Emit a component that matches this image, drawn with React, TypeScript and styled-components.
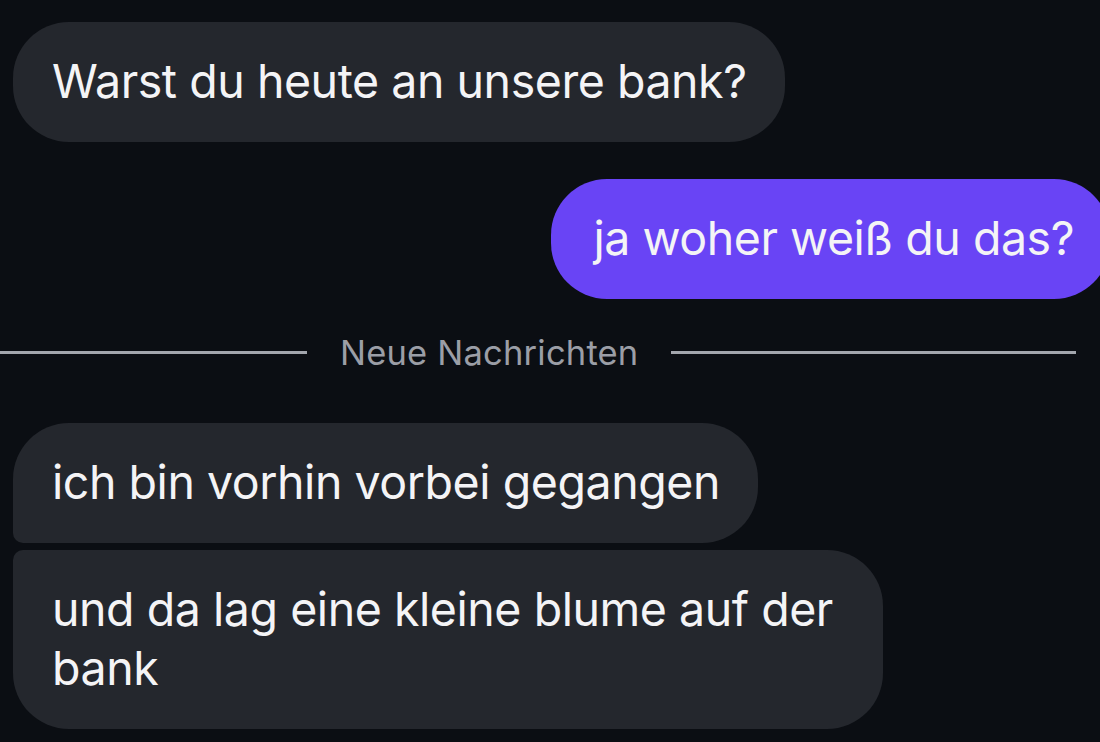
import React from "react";
import styled, { createGlobalStyle, css } from "styled-components";

const GlobalStyle = createGlobalStyle`
  html, body {
    margin: 0;
    padding: 0;
    background: #0b0e13;
    overflow: hidden;
  }
  body {
    font-family: Inter, "Noto Sans", "Liberation Sans", sans-serif;
    -webkit-font-smoothing: antialiased;
  }
`;

const Thread = styled.div`
  width: 1100px;
  height: 742px;
  display: flex;
  flex-direction: column;
  padding-top: 22px;
  box-sizing: border-box;
  overflow: hidden;
`;

type Corner = "round" | "tight";

const Bubble = styled.div<{
  $outgoing?: boolean;
  $top?: number;
  $tl?: Corner;
  $bl?: Corner;
}>`
  box-sizing: border-box;
  max-width: 870px;
  width: fit-content;
  padding: 30px 38px 31px 39px;
  font-size: 46.5px;
  line-height: 59px;
  letter-spacing: -0.45px;
  color: #f4f4f6;
  background: #24272d;
  margin-top: ${(p) => p.$top ?? 0}px;
  border-radius: ${(p) => (p.$tl === "tight" ? 10 : 56)}px 56px 56px
    ${(p) => (p.$bl === "tight" ? 10 : 56)}px;
  align-self: flex-start;
  margin-left: 13px;
  ${(p) =>
    p.$outgoing &&
    css`
      align-self: flex-end;
      margin-left: 0;
      margin-right: -10px;
      background: #6944f5;
      padding: 30px 36px 31px 42px;
    `}
`;

const Divider = styled.div`
  display: flex;
  align-items: center;
  gap: 33px;
  height: 40px;
  margin-top: 33px;
  padding-right: 24px;
`;

const Line = styled.div<{ $fixed?: number }>`
  height: 3px;
  background: #a3a6ad;
  ${(p) => (p.$fixed ? `flex: 0 0 ${p.$fixed}px;` : `flex: 1;`)}
`;

const DividerLabel = styled.span`
  font-size: 34.5px;
  color: #9b9ea6;
  letter-spacing: 0.2px;
  white-space: nowrap;
`;

export default function App() {
  return (
    <>
      <GlobalStyle />
      <Thread>
        <Bubble>Warst du heute an unsere bank?</Bubble>
        <Bubble $outgoing $top={37}>
          ja woher weiß du das?
        </Bubble>
        <Divider>
          <Line $fixed={307} />
          <DividerLabel>Neue Nachrichten</DividerLabel>
          <Line />
        </Divider>
        <Bubble $top={51} $bl="tight">
          ich bin vorhin vorbei gegangen
        </Bubble>
        <Bubble $top={7} $tl="tight">
          und da lag eine kleine blume auf der bank
        </Bubble>
      </Thread>
    </>
  );
}
